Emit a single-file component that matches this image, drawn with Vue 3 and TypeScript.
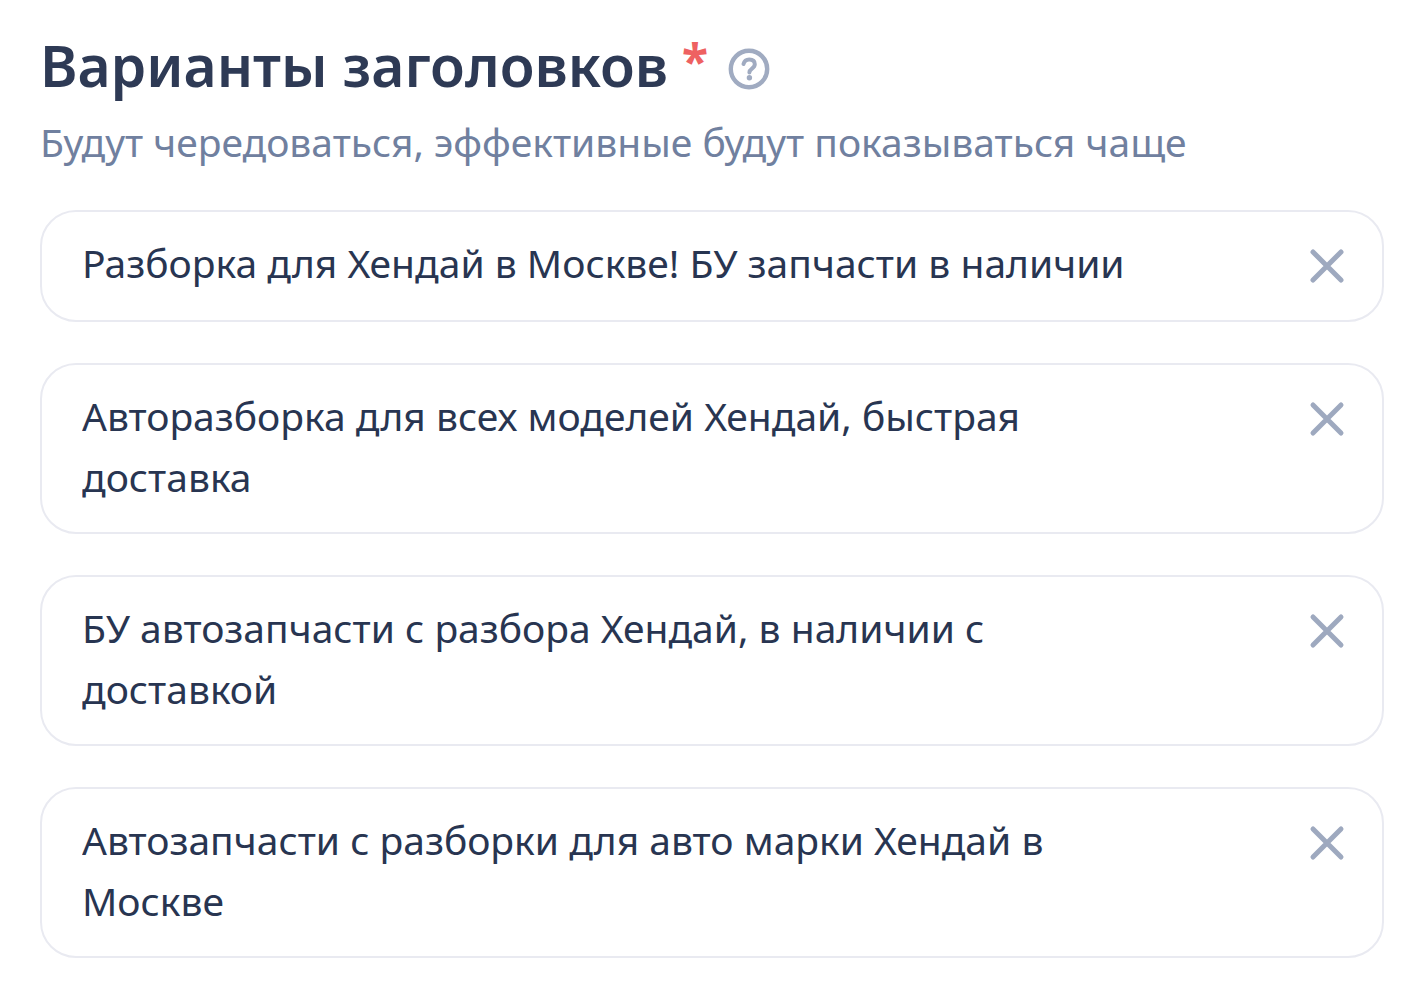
<script setup lang="ts">
import { ref } from 'vue'

interface Headline {
  id: number
  text: string
}

const headlines = ref<Headline[]>([
  { id: 1, text: 'Разборка для Хендай в Москве! БУ запчасти в наличии' },
  { id: 2, text: 'Авторазборка для всех моделей Хендай, быстрая доставка' },
  { id: 3, text: 'БУ автозапчасти с разбора Хендай, в наличии с доставкой' },
  { id: 4, text: 'Автозапчасти с разборки для авто марки Хендай в Москве' },
])

function rowsFor(text: string): number {
  return text.length > 51 ? 2 : 1
}

function remove(id: number): void {
  headlines.value = headlines.value.filter((h) => h.id !== id)
}
</script>

<template>
  <main class="panel">
    <header class="head">
      <h1 class="title">Варианты заголовков</h1>
      <span class="required">*</span>
      <button class="help" type="button" aria-label="Справка">
        <svg viewBox="0 0 42 42" width="42" height="42" fill="none" stroke="currentColor">
          <circle cx="21" cy="21" r="18.200" stroke-width="4.400" />
          <path d="M15.500 16C16.300 12.800 18.300 11.500 21.200 11.500c3.600 0 5.600 1.900 5.600 4.700 0 4.500-5.400 4.200-5.400 8.200" stroke-width="4" stroke-linecap="round" />
          <circle cx="21.400" cy="29.800" r="2.700" fill="currentColor" stroke="none" />
        </svg>
      </button>
    </header>
    <p class="hint">Будут чередоваться, эффективные будут показываться чаще</p>
    <ul class="list">
      <li v-for="h in headlines" :key="h.id" class="item">
        <textarea v-model="h.text" class="field" :rows="rowsFor(h.text)" aria-label="Заголовок" spellcheck="false"></textarea>
        <button class="remove" type="button" aria-label="Удалить" @click="remove(h.id)">
          <svg viewBox="0 0 36 36" width="36" height="36" fill="none" stroke="currentColor" stroke-width="5" stroke-linecap="round">
            <path d="M4 4L32 32M32 4L4 32" />
          </svg>
        </button>
      </li>
    </ul>
  </main>
</template>

<style>
body {
  background: #fff;
}
</style>

<style scoped>
.panel {
  box-sizing: border-box;
  padding: 32px 42px 40px 40px;
  font-family: "Noto Sans", sans-serif;
  color: #283551;
}
.head {
  display: flex;
  align-items: flex-start;
  height: 72px;
}
.title {
  margin: 0;
  color: #2e3a55;
  font-size: 57px;
  font-weight: 600;
  line-height: 66px;
}
.required {
  margin-left: 14px;
  color: #ee6161;
  font-size: 48px;
  font-weight: 700;
  line-height: 58px;
}
.help {
  display: flex;
  margin-top: 16px;
  margin-left: 20px;
  padding: 0;
  border: 0;
  background: none;
  color: #a0abc1;
}
.hint {
  margin: 11px 0 41px;
  color: #70809f;
  font-size: 39px;
  line-height: 54px;
}
.list {
  display: flex;
  flex-direction: column;
  gap: 41px;
  margin: 0;
  padding: 0;
  list-style: none;
}
.item {
  box-sizing: border-box;
  display: flex;
  justify-content: space-between;
  align-items: flex-start;
  min-height: 112px;
  padding: 20px 37px 25px 40px;
  border: 2px solid #e9eaf1;
  border-radius: 36px;
}
.field {
  display: block;
  flex: 0 1 1070px;
  min-width: 0;
  padding: 0;
  border: 0;
  outline: 0;
  resize: none;
  overflow: hidden;
  background: none;
  color: inherit;
  font: inherit;
  font-size: 39px;
  line-height: 61px;
}
.remove {
  display: flex;
  margin-top: 16px;
  padding: 0;
  border: 0;
  background: none;
  color: #9ea9bf;
}
</style>
